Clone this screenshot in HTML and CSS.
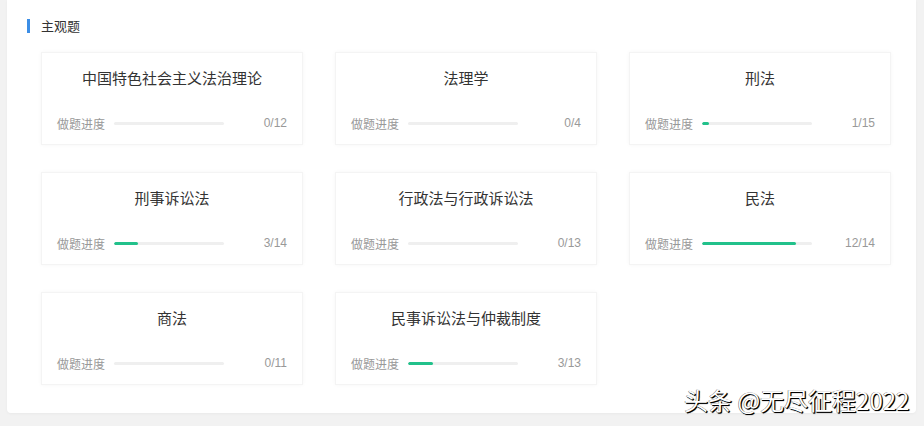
FILE: index.html
```html
<!DOCTYPE html>
<html lang="zh">
<head>
<meta charset="utf-8">
<link rel="stylesheet" href="styles.css">
</head>
<body>
<div class="panel">
  <div class="head"><span class="bar"></span><span class="head-text">主观题</span></div>
  <div class="grid">
    <div class="card"><div class="title">中国特色社会主义法治理论</div><div class="prog"><span class="label">做题进度</span><span class="track"><span class="fill" style="width:0%"></span></span><span class="count">0/12</span></div></div>
    <div class="card"><div class="title">法理学</div><div class="prog"><span class="label">做题进度</span><span class="track"><span class="fill" style="width:0%"></span></span><span class="count">0/4</span></div></div>
    <div class="card"><div class="title">刑法</div><div class="prog"><span class="label">做题进度</span><span class="track"><span class="fill" style="width:6.67%"></span></span><span class="count">1/15</span></div></div>
    <div class="card"><div class="title">刑事诉讼法</div><div class="prog"><span class="label">做题进度</span><span class="track"><span class="fill" style="width:21.43%"></span></span><span class="count">3/14</span></div></div>
    <div class="card"><div class="title">行政法与行政诉讼法</div><div class="prog"><span class="label">做题进度</span><span class="track"><span class="fill" style="width:0%"></span></span><span class="count">0/13</span></div></div>
    <div class="card"><div class="title">民法</div><div class="prog"><span class="label">做题进度</span><span class="track"><span class="fill" style="width:85.71%"></span></span><span class="count">12/14</span></div></div>
    <div class="card"><div class="title">商法</div><div class="prog"><span class="label">做题进度</span><span class="track"><span class="fill" style="width:0%"></span></span><span class="count">0/11</span></div></div>
    <div class="card"><div class="title">民事诉讼法与仲裁制度</div><div class="prog"><span class="label">做题进度</span><span class="track"><span class="fill" style="width:23.08%"></span></span><span class="count">3/13</span></div></div>
  </div>
</div>
<div class="watermark">头条 @无尽征程2022</div>
</body>
</html>
```

FILE: styles.css
```css
html, body {
  margin: 0;
  padding: 0;
}
body {
  background: #f2f2f2;
  font-family: "Noto Sans CJK SC", "Noto Sans", sans-serif;
  width: 924px;
  height: 426px;
  overflow: hidden;
  position: relative;
}
.panel {
  margin-left: 7px;
  width: 909px;
  height: 413px;
  background: #fff;
  border-radius: 0 0 4px 4px;
  box-sizing: border-box;
  padding: 17px 0 0 20px;
  box-shadow: 0 1px 3px rgba(0,0,0,0.04);
}
.head {
  display: flex;
  align-items: center;
  height: 18px;
}
.bar {
  width: 3px;
  height: 14px;
  background: #3c8ee6;
}
.head-text {
  margin-left: 11px;
  font-size: 13px;
  color: #333;
  line-height: 18px;
}
.grid {
  margin-left: 14px;
  margin-top: 17px;
  display: grid;
  grid-template-columns: repeat(3, 262px);
  grid-auto-rows: 93px;
  column-gap: 32px;
  row-gap: 27px;
}
.card {
  box-sizing: border-box;
  border: 1px solid #f4f4f4;
  box-shadow: 0 0 4px rgba(0,0,0,0.04);
  background: #fff;
  padding: 15px 15px 0 15px;
}
.title {
  text-align: center;
  font-size: 15px;
  line-height: 20px;
  color: #333;
}
.prog {
  display: flex;
  align-items: center;
  margin-top: 26px;
  height: 18px;
}
.label {
  font-size: 12px;
  color: #999;
  width: 48px;
  white-space: nowrap;
}
.track {
  margin-left: 9px;
  width: 110px;
  height: 3px;
  background: #efefef;
  border-radius: 2px;
  overflow: hidden;
  display: block;
}
.fill {
  display: block;
  height: 100%;
  background: #22c18b;
  border-radius: 2px;
}
.count {
  margin-left: auto;
  font-size: 12px;
  color: #999;
  font-family: "Liberation Sans", Arial, sans-serif;
}
.watermark {
  position: absolute;
  left: 684px;
  top: 385px;
  font-size: 24px;
  line-height: 30px;
  color: #fff;
  white-space: nowrap;
  text-shadow: 1px 1px 0 #000, 1px 1px 1px #000, -0.5px -0.5px 0 #666;
}
```
